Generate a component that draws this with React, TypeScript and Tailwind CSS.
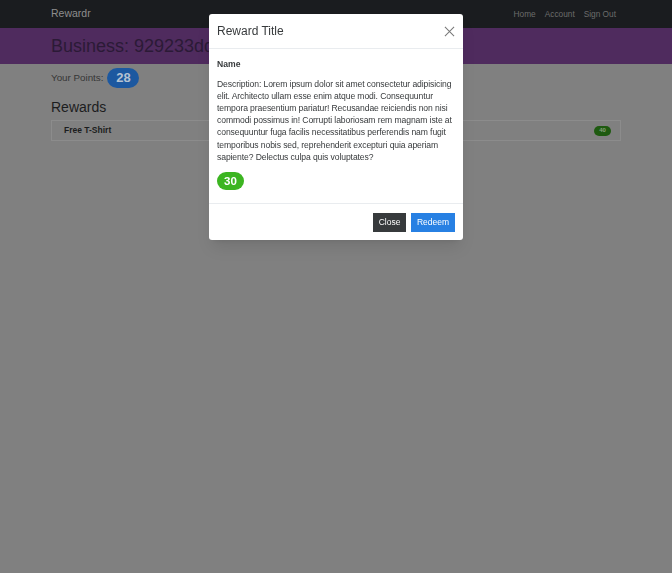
import React from 'react';

// Page colours below are already dimmed by the modal backdrop (50% black).

const rewards = [{ name: 'Free T-Shirt', points: 40 }];

const descriptionLines = [
  'Description: Lorem ipsum dolor sit amet consectetur adipisicing',
  'elit. Architecto ullam esse enim atque modi. Consequuntur',
  'tempora praesentium pariatur! Recusandae reiciendis non nisi',
  'commodi possimus in! Corrupti laboriosam rem magnam iste at',
  'consequuntur fuga facilis necessitatibus perferendis nam fugit',
  'temporibus nobis sed, reprehenderit excepturi quia aperiam',
  'sapiente? Delectus culpa quis voluptates?',
];

function Navbar() {
  return (
    <nav className="h-[28px] bg-[#1a1c1f]">
      <div className="mx-auto flex h-full w-[570px] items-center justify-between pr-[5px]">
        <span className="text-[10.5px] text-[#8e8e8e]">Rewardr</span>
        <div className="flex gap-[9px] text-[8.3px] text-[#6c6c6c]">
          <span>Home</span>
          <span>Account</span>
          <span>Sign Out</span>
        </div>
      </div>
    </nav>
  );
}

function RewardModal() {
  return (
    <div className="fixed inset-0 z-20">
      <div className="ml-[209px] mt-[14px] w-[254px] overflow-hidden rounded-[3px] bg-white text-[#373a3c] shadow-lg">
        {/* Header */}
        <div className="flex h-[35px] items-center justify-between border-b border-[#e9ecef] px-[8px]">
          <h5 className="text-[12px]">Reward Title</h5>
          <svg width="11" height="11" viewBox="0 0 12 12" className="text-[#777]">
            <path d="M1 1L11 11M11 1L1 11" stroke="currentColor" strokeWidth="1.1" />
          </svg>
        </div>

        {/* Body */}
        <div className="px-[8px] pt-[9px] pb-[13px] text-[8.6px] leading-[12.1px]">
          <p className="mb-[8px] font-bold">Name</p>
          <p className="mb-[9px] tracking-[-0.1px]">
            {descriptionLines.map((line) => (
              <span key={line} className="block whitespace-nowrap">
                {line}
              </span>
            ))}
          </p>
          <span className="inline-flex h-[18px] w-[27px] items-center justify-center rounded-full bg-[#3cb521] text-[11.5px] font-bold text-white">
            30
          </span>
        </div>

        {/* Footer */}
        <div className="flex justify-end gap-[5px] border-t border-[#e9ecef] px-[8px] pt-[9px] pb-[8px]">
          <button className="flex h-[19px] w-[33px] items-center justify-center bg-[#373a3c] text-[8.5px] text-white">
            Close
          </button>
          <button className="flex h-[19px] w-[44px] items-center justify-center bg-[#2780e3] text-[8.5px] text-white">
            Redeem
          </button>
        </div>
      </div>
    </div>
  );
}

export default function App() {
  return (
    <div
      className="relative min-h-[573px] bg-[#808080] text-[#1c1d1e]"
      style={{ fontFamily: '"Liberation Sans", Arial, sans-serif' }}
    >
      <Navbar />

      {/* Business banner */}
      <div className="h-[36px] bg-[#4f2b5e]">
        <div className="mx-auto flex h-full w-[570px] items-center">
          <h1 className="whitespace-nowrap text-[18px] text-[#2b1a36]">Business: 929233dd11f84c2a</h1>
        </div>
      </div>

      <div className="mx-auto w-[570px]">
        <div className="mt-[4px] flex h-[20px] items-center gap-[4px]">
          <span className="text-[9.8px] text-[#363636]">Your Points:</span>
          <span className="inline-flex h-[20px] w-[32px] items-center justify-center rounded-full bg-[#1c58a0] text-[13px] font-bold text-[#b4c2d2]">
            28
          </span>
        </div>

        <h3 className="mt-[9px] text-[14px] leading-[20px]">Rewards</h3>

        <ul className="mt-[3px]">
          {rewards.map((r) => (
            <li
              key={r.name}
              className="flex h-[21px] items-center justify-between border border-[#8c8c8c] pr-[9px] pl-[12px]"
            >
              <span className="text-[8.5px] font-bold">{r.name}</span>
              <span className="inline-flex h-[10px] w-[17px] items-center justify-center rounded-full bg-[#1e5a10] text-[6px] font-bold text-[#86a07c]">
                {r.points}
              </span>
            </li>
          ))}
        </ul>
      </div>

      <RewardModal />
    </div>
  );
}
